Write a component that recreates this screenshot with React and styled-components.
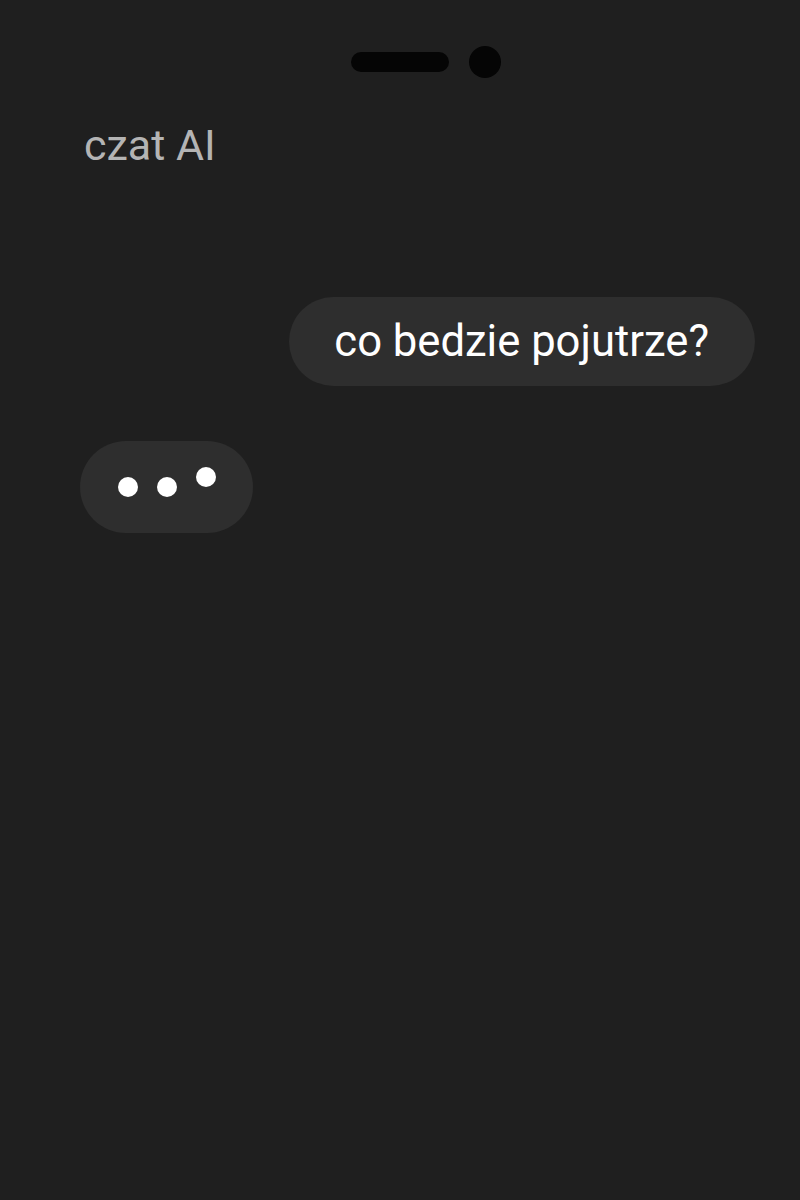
import React from "react"
import styled, { createGlobalStyle } from "styled-components"

const GlobalStyle = createGlobalStyle`
  html, body {
    margin: 0;
    padding: 0;
    background: #1f1f1f;
  }
  body {
    font-family: Roboto, "Noto Sans", "Liberation Sans", sans-serif;
  }
`

function App() {
  return (
    <Screen>
      <GlobalStyle />
      <Notch>
        <Speaker />
        <Camera />
      </Notch>
      <Title>czat AI</Title>
      <Thread>
        <Bubble $mine>co bedzie pojutrze?</Bubble>
        <Typing>
          <Dot />
          <Dot />
          <Dot $raised />
        </Typing>
      </Thread>
    </Screen>
  )
}

export default App

const Screen = styled.div`
  width: 800px;
  height: 1200px;
  background: #1f1f1f;
  padding-top: 46px;
  box-sizing: border-box;
  overflow: hidden;
`

const Notch = styled.div`
  display: grid;
  grid-template-columns: 1fr auto 1fr;
  align-items: center;
  height: 32px;
`

const Speaker = styled.div`
  grid-column: 2;
  width: 98px;
  height: 20px;
  border-radius: 10px;
  background: #050505;
`

const Camera = styled.div`
  grid-column: 3;
  justify-self: start;
  margin-left: 20px;
  width: 32px;
  height: 32px;
  border-radius: 50%;
  background: #050505;
`

const Title = styled.h1`
  margin: 42px 0 0 84px;
  font-size: 43px;
  font-weight: 400;
  line-height: 50px;
  color: #b4b4b4;
`

const Thread = styled.div`
  display: flex;
  flex-direction: column;
  gap: 55px;
  padding: 0 45px 0 80px;
  margin-top: 127px;
`

const Bubble = styled.div`
  align-self: ${(p) => (p.$mine ? "flex-end" : "flex-start")};
  background: #2e2e2e;
  color: #ffffff;
  font-size: 43.6px;
  line-height: 89px;
  height: 89px;
  padding: 0 46px 0 45px;
  border-radius: 45px;
  white-space: nowrap;
`

const Typing = styled.div`
  align-self: flex-start;
  display: flex;
  align-items: center;
  gap: 19px;
  height: 92px;
  padding: 0 37px 0 38px;
  background: #2e2e2e;
  border-radius: 46px;
`

const Dot = styled.span`
  width: 20px;
  height: 20px;
  border-radius: 50%;
  background: #ffffff;
  transform: translateY(${(p) => (p.$raised ? "-10px" : "0")});
`
